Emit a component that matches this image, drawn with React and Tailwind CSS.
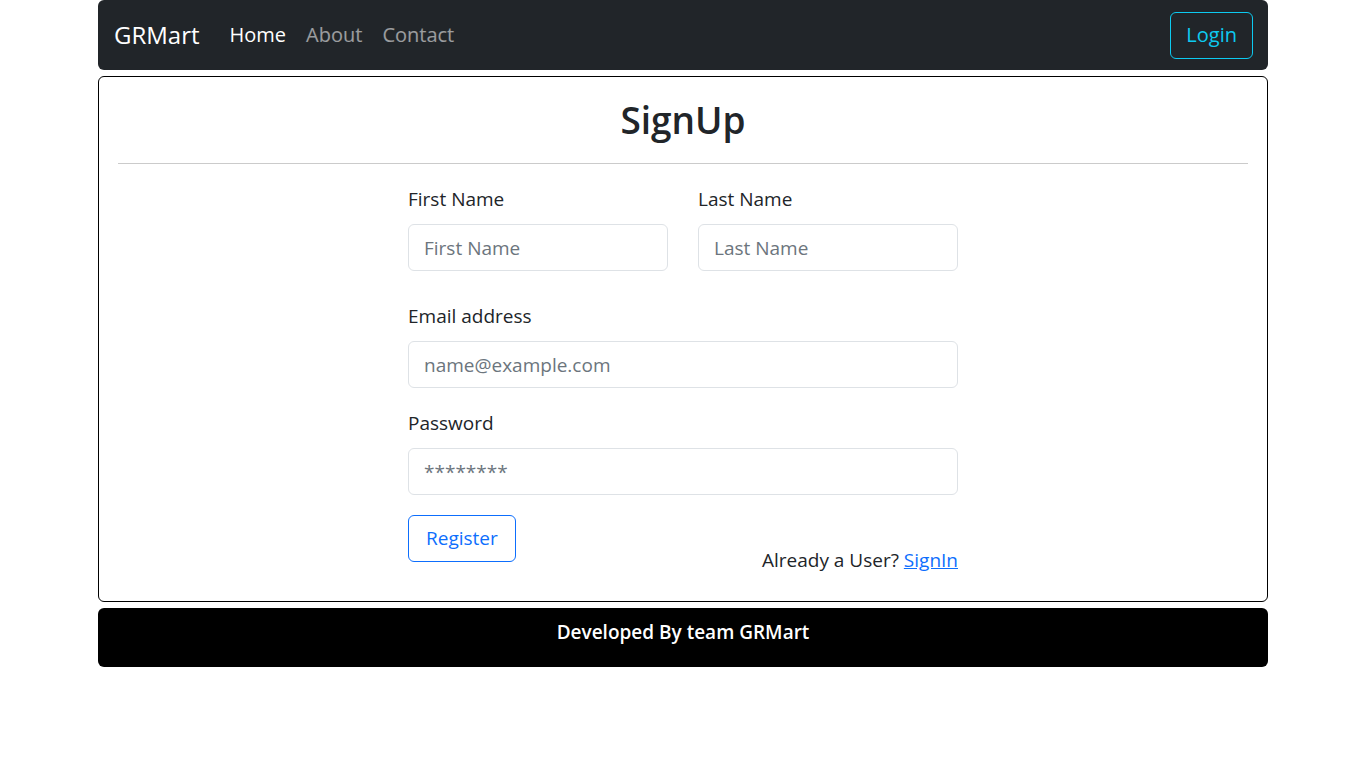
import React from "react";

const FONT = { fontFamily: "'Open Sans', 'Noto Sans', sans-serif" };

function Field({ label, placeholder, type = "text", className = "" }) {
  return (
    <div className={`flex flex-col ${className}`}>
      <label className="h-[28px] text-[19px] leading-[28px] text-[#212529]">
        {label}
      </label>
      <input
        type={type}
        placeholder={placeholder}
        className="mt-[11px] h-[47px] w-full rounded-[6px] border border-[#dee2e6] px-[15px] text-[19px] text-[#212529] placeholder:text-[#6c757d] outline-none"
      />
    </div>
  );
}

export default function App() {
  return (
    <div className="min-h-screen bg-white" style={FONT}>
      <div className="mx-auto flex w-[1170px] flex-col gap-[6px]">
        {/* Navbar */}
        <nav className="flex h-[70px] items-center justify-between rounded-md bg-[#212529] px-[16px]">
          <div className="flex items-center">
            <a className="text-[24px] text-white">GRMart</a>
            <ul className="ml-[20px] flex items-center text-[20px]">
              <li className="px-[10px] text-white">Home</li>
              <li className="px-[10px] text-white/55">About</li>
              <li className="px-[10px] text-white/55">Contact</li>
            </ul>
          </div>
          <button className="mr-[-1px] h-[47px] rounded-[6px] border border-[#0dcaf0] px-[15px] text-[20px] text-[#0dcaf0]">
            Login
          </button>
        </nav>

        {/* Card */}
        <section className="rounded-md border border-black px-[19px] pb-[27px]">
          <div className="flex h-[86px] items-center justify-center">
            <h1 className="text-[37px] font-semibold text-[#212529]">SignUp</h1>
          </div>
          <hr className="border-0 border-t border-[#cbcbcb]" />
          <form className="mx-auto mt-[21px] w-[550px]">
            <div className="grid grid-cols-2 gap-[30px]">
              <Field label="First Name" placeholder="First Name" />
              <Field label="Last Name" placeholder="Last Name" />
            </div>
            <Field
              className="mt-[31px]"
              label="Email address"
              placeholder="name@example.com"
              type="email"
            />
            <Field
              className="mt-[21px]"
              label="Password"
              placeholder="********"
              type="password"
            />
            <div className="mt-[20px] flex items-start justify-between">
              <button
                type="button"
                className="h-[47px] rounded-[6px] border border-[#0d6efd] px-[17px] text-[19px] text-[#0d6efd]"
              >
                Register
              </button>
              <p className="pt-[31px] text-[19px] leading-[28px] text-[#212529]">
                Already a User?{" "}
                <a className="text-[#0d6efd] underline">SignIn</a>
              </p>
            </div>
          </form>
        </section>

        {/* Footer */}
        <footer className="h-[59px] rounded-md bg-black pt-[10px] text-center text-[19px] font-semibold leading-[28px] text-white">
          Developed By team GRMart
        </footer>
      </div>
    </div>
  );
}
